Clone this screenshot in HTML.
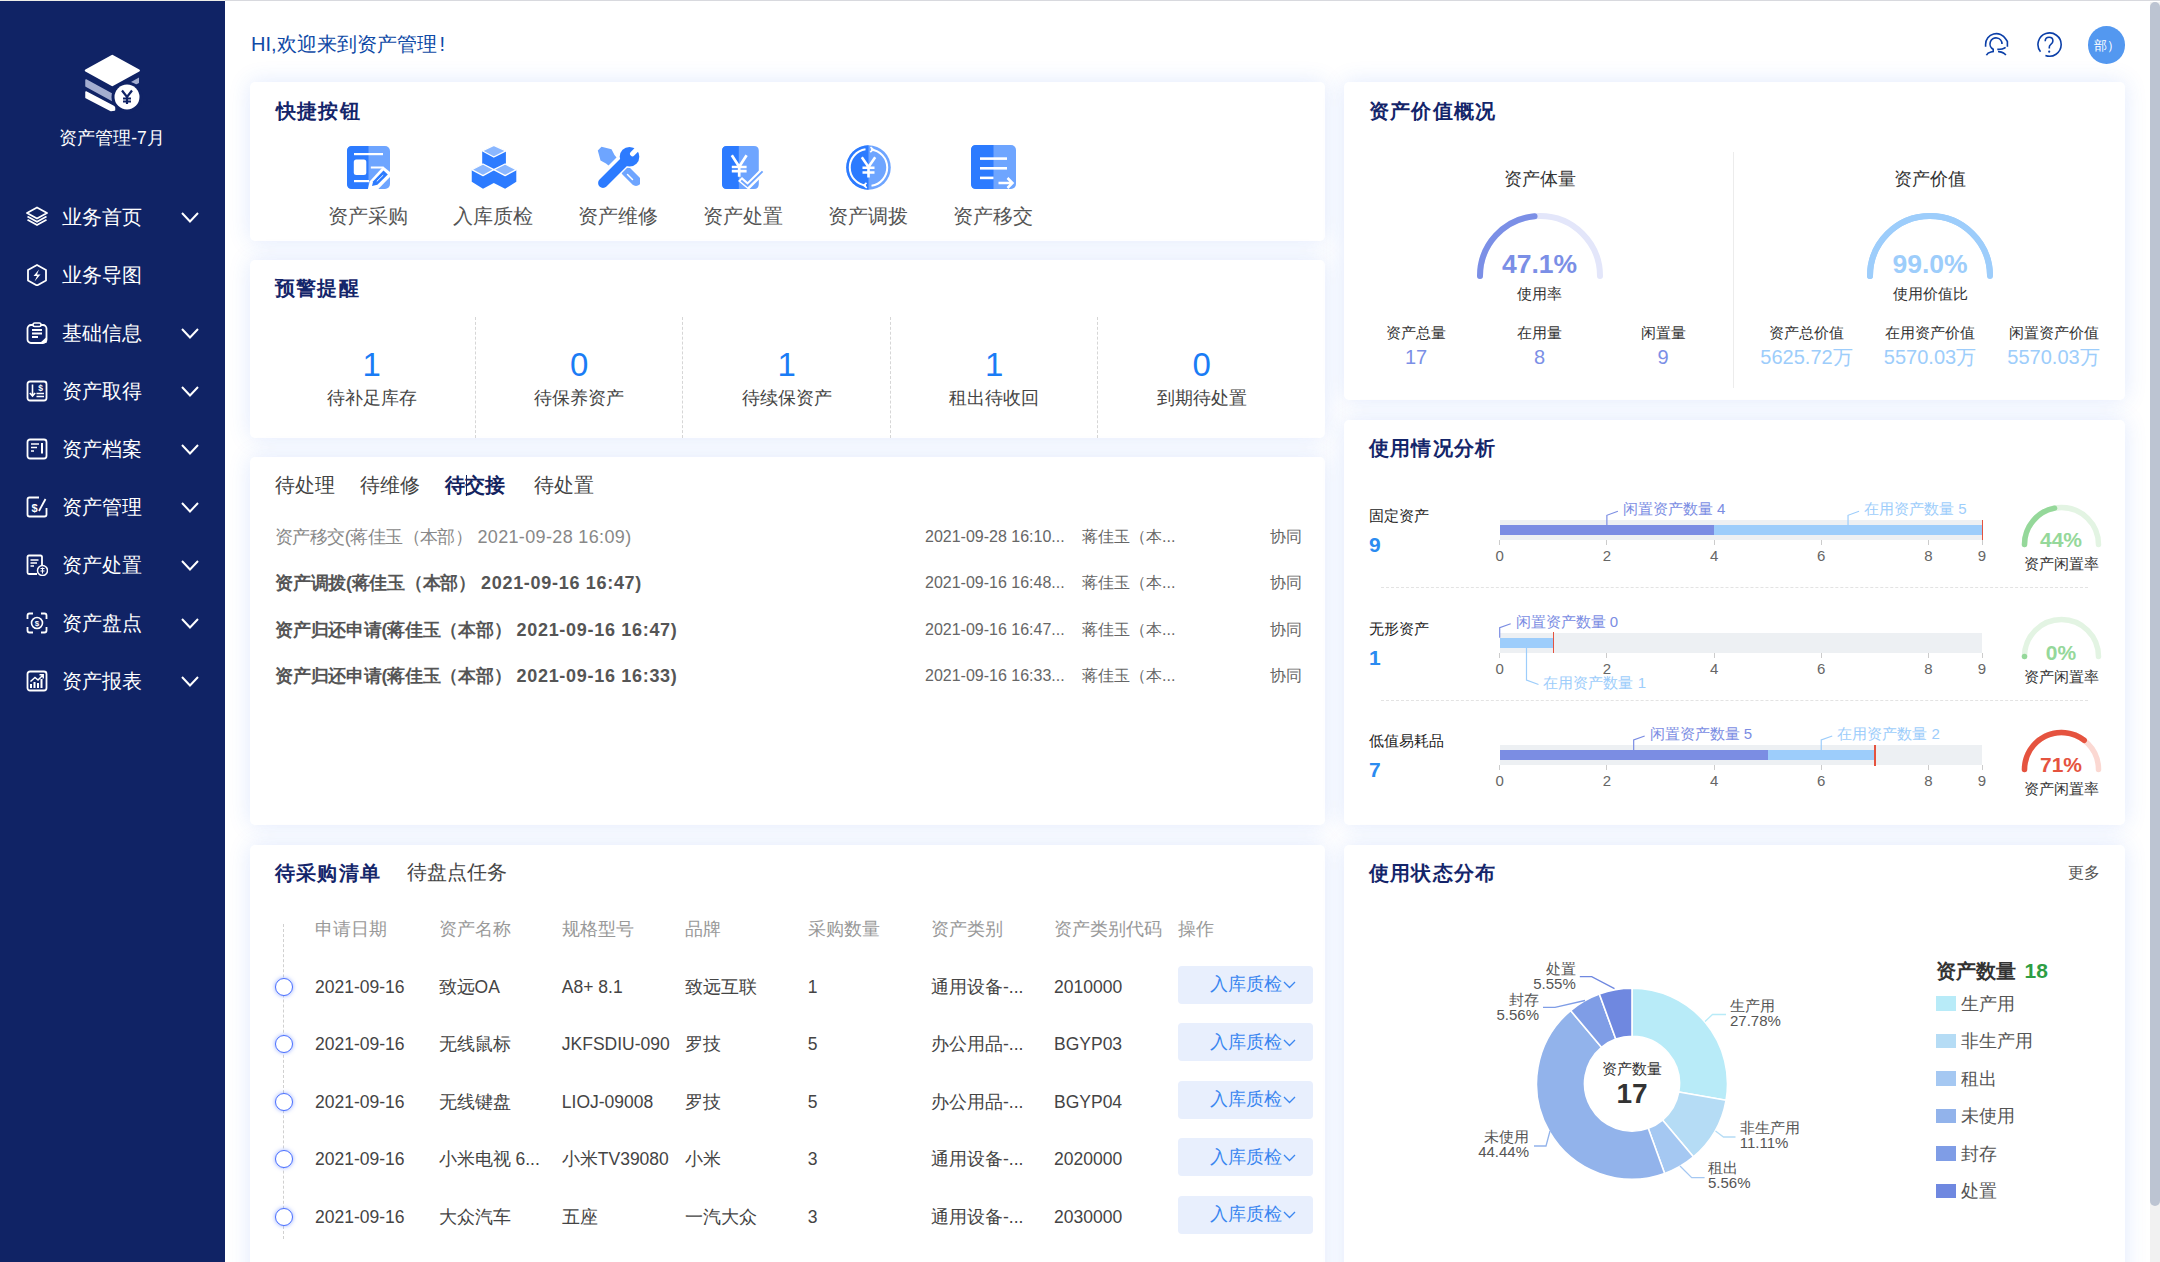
<!DOCTYPE html>
<html><head><meta charset="utf-8">
<style>
*{margin:0;padding:0;box-sizing:border-box}
html,body{width:2160px;height:1262px;overflow:hidden;background:#fff;font-family:"Liberation Sans",sans-serif;position:relative}
.t{position:absolute;line-height:1;white-space:nowrap}
.c{transform:translateX(-50%)}
.r{transform:translateX(-100%)}
.card{position:absolute;background:#fff;border-radius:5px;box-shadow:0 0 22px rgba(50,110,240,0.15)}
.side{position:absolute;left:0;top:1px;width:225px;height:1261px;background:#102365}
.mi{position:absolute;left:0;width:225px;height:40px}
.mi .tx{position:absolute;left:62px;top:10px;font-size:20px;line-height:20px;color:#fff}
.mi svg.ic{position:absolute;left:26px;top:9px}
.mi svg.ch{position:absolute;left:181px;top:15px}
.ttl{font-size:19.5px;font-weight:900;color:#14256a;letter-spacing:1.2px}
</style></head><body>
<!-- top line -->
<div style="position:absolute;left:225px;top:0;width:1935px;height:1px;background:#d8d9de"></div><div style="position:absolute;left:0;top:0;width:225px;height:1px;background:#eeeee8"></div>
<!-- sidebar -->
<div class="side" id="side">
<svg style="position:absolute;left:0;top:-1px" width="225" height="160" viewBox="0 0 225 160">
 <polygon points="86,70.5 112.3,56 138.7,70.5 112.3,85" fill="#fff" stroke="#fff" stroke-width="2.5" stroke-linejoin="round"/>
 <polygon points="86,80 112.5,94.5 112.5,100.5 86,86" fill="#a4aed0" stroke="#a4aed0" stroke-width="1.5" stroke-linejoin="round"/>
 <polygon points="131,82 139,77.5 139,83 133,86" fill="#a4aed0"/>
 <polygon points="86,92 114.5,107 114.5,110 111,110.5 86,97.5" fill="#fff" stroke="#fff" stroke-width="1.5" stroke-linejoin="round"/>
 <circle cx="127" cy="97" r="15.5" fill="#102365"/>
 <circle cx="127" cy="97" r="12.5" fill="#fff"/>
 <path d="M122,90.5 L127,97 L132,90.5 M127,97 L127,104 M123,98.5 L131,98.5 M123,101.5 L131,101.5" stroke="#102365" stroke-width="2.2" fill="none"/>
</svg>
<div class="t c" style="left:112px;top:129px;font-size:17.5px;color:#fff">资产管理-7月</div>
<div class="mi" style="top:195.5px"><svg class="ic" width="22" height="22" viewBox="0 0 22 22"><path d="M11,1.5 L21,7 L11,12.5 L1,7 Z M1.5,10.5 L11,15.8 L20.5,10.5 M1.5,13.8 L11,19 L20.5,13.8" stroke="#fff" stroke-width="1.8" fill="none" stroke-linejoin="round"/></svg><div class="tx">业务首页</div><svg class="ch" width="18" height="11" viewBox="0 0 18 11"><path d="M1,1 L9,9.5 L17,1" stroke="#fff" stroke-width="2" fill="none"/></svg></div>
<div class="mi" style="top:253.5px"><svg class="ic" width="22" height="22" viewBox="0 0 22 22"><path d="M11,1 L20,6 L20,16.5 L11,21.5 L2,16.5 L2,6 Z" stroke="#fff" stroke-width="1.8" fill="none" stroke-linejoin="round"/><path d="M13,5.5 L7.5,12 L11,12 L8.5,17.5 L14.5,10.5 L11,10.5 Z" fill="#fff"/></svg><div class="tx">业务导图</div></div>
<div class="mi" style="top:311.5px"><svg class="ic" width="22" height="22" viewBox="0 0 22 22"><rect x="1.5" y="3" width="19" height="18" rx="3.5" stroke="#fff" stroke-width="1.8" fill="none"/><rect x="7" y="1" width="8" height="3.5" rx="1.7" fill="#102365" stroke="#fff" stroke-width="1.6"/><path d="M6,8 H16 M6,11.5 H16 M6,15 H12" stroke="#fff" stroke-width="1.8"/><path d="M14,21 L20.5,15 L20.5,21 Z" fill="#fff"/></svg><div class="tx">基础信息</div><svg class="ch" width="18" height="11" viewBox="0 0 18 11"><path d="M1,1 L9,9.5 L17,1" stroke="#fff" stroke-width="2" fill="none"/></svg></div>
<div class="mi" style="top:369.5px"><svg class="ic" width="22" height="22" viewBox="0 0 22 22"><rect x="1.5" y="1.5" width="19" height="19" rx="2.5" stroke="#fff" stroke-width="1.8" fill="none"/><path d="M6.5,4.5 V16 M3.8,13 L6.5,16 L9.2,13" stroke="#fff" stroke-width="1.6" fill="none"/><text x="14.5" y="11" font-size="8.5" font-weight="bold" fill="#fff" text-anchor="middle" font-family="Liberation Sans">$</text><path d="M10.5,13.5 H18 M10.5,16.5 H18" stroke="#fff" stroke-width="1.5"/></svg><div class="tx">资产取得</div><svg class="ch" width="18" height="11" viewBox="0 0 18 11"><path d="M1,1 L9,9.5 L17,1" stroke="#fff" stroke-width="2" fill="none"/></svg></div>
<div class="mi" style="top:427.5px"><svg class="ic" width="22" height="22" viewBox="0 0 22 22"><rect x="1.5" y="1.5" width="19" height="19" rx="2.5" stroke="#fff" stroke-width="1.8" fill="none"/><path d="M5,6 H13 M5,9.5 H11 M5,13 H8" stroke="#fff" stroke-width="1.7"/><path d="M16,5 V15.5" stroke="#fff" stroke-width="2"/></svg><div class="tx">资产档案</div><svg class="ch" width="18" height="11" viewBox="0 0 18 11"><path d="M1,1 L9,9.5 L17,1" stroke="#fff" stroke-width="2" fill="none"/></svg></div>
<div class="mi" style="top:485.5px"><svg class="ic" width="22" height="22" viewBox="0 0 22 22"><path d="M13,1.5 H3.5 Q1.5,1.5 1.5,3.5 V18.5 Q1.5,20.5 3.5,20.5 H18.5 Q20.5,20.5 20.5,18.5 V12" stroke="#fff" stroke-width="1.8" fill="none"/><text x="8.5" y="15.5" font-size="11" font-weight="bold" fill="#fff" text-anchor="middle" font-family="Liberation Sans">$</text><path d="M13,15 L19.5,3" stroke="#fff" stroke-width="1.8"/></svg><div class="tx">资产管理</div><svg class="ch" width="18" height="11" viewBox="0 0 18 11"><path d="M1,1 L9,9.5 L17,1" stroke="#fff" stroke-width="2" fill="none"/></svg></div>
<div class="mi" style="top:543.5px"><svg class="ic" width="22" height="22" viewBox="0 0 22 22"><path d="M16,12 V3 Q16,1.5 14.5,1.5 H3 Q1.5,1.5 1.5,3 V18.5 Q1.5,20 3,20 H11" stroke="#fff" stroke-width="1.8" fill="none"/><path d="M4.5,6 H12.5 M4.5,9 H11 M4.5,12 H8" stroke="#fff" stroke-width="1.6"/><circle cx="16.5" cy="16.5" r="5" fill="#102365" stroke="#fff" stroke-width="1.5"/><path d="M14.5,14.5 H18.5 M16.5,13.5 V19.5 M14.5,17 H18.5" stroke="#fff" stroke-width="1.1"/></svg><div class="tx">资产处置</div><svg class="ch" width="18" height="11" viewBox="0 0 18 11"><path d="M1,1 L9,9.5 L17,1" stroke="#fff" stroke-width="2" fill="none"/></svg></div>
<div class="mi" style="top:601.5px"><svg class="ic" width="22" height="22" viewBox="0 0 22 22"><path d="M1.5,7 V3.5 Q1.5,1.5 3.5,1.5 H7 M15,1.5 H18.5 Q20.5,1.5 20.5,3.5 V7 M20.5,15 V18.5 Q20.5,20.5 18.5,20.5 H15 M7,20.5 H3.5 Q1.5,20.5 1.5,18.5 V15" stroke="#fff" stroke-width="1.8" fill="none"/><circle cx="11" cy="11" r="5.5" stroke="#fff" stroke-width="1.6" fill="none"/><text x="11" y="14" font-size="8" font-weight="bold" fill="#fff" text-anchor="middle" font-family="Liberation Sans">$</text></svg><div class="tx">资产盘点</div><svg class="ch" width="18" height="11" viewBox="0 0 18 11"><path d="M1,1 L9,9.5 L17,1" stroke="#fff" stroke-width="2" fill="none"/></svg></div>
<div class="mi" style="top:659.5px"><svg class="ic" width="22" height="22" viewBox="0 0 22 22"><rect x="1.5" y="1.5" width="19" height="19" rx="2.5" stroke="#fff" stroke-width="1.8" fill="none"/><path d="M5,18 V14 M8.5,18 V12 M12,18 V13 M15.5,18 V9" stroke="#fff" stroke-width="2"/><path d="M4.5,11.5 L9,7.5 L12,10 L17,5 M13.5,4.8 H17.2 V8.5" stroke="#fff" stroke-width="1.5" fill="none"/></svg><div class="tx">资产报表</div><svg class="ch" width="18" height="11" viewBox="0 0 18 11"><path d="M1,1 L9,9.5 L17,1" stroke="#fff" stroke-width="2" fill="none"/></svg></div>
</div>
<!-- scrollbar -->
<div style="position:absolute;left:2150px;top:2px;width:10px;height:1260px;background:#f1f1f1"></div>
<div style="position:absolute;left:2150px;top:2px;width:10px;height:1204px;background:#bcc4d2;border-radius:5px"></div>

<!-- header -->
<div class="t" style="left:251px;top:34px;font-size:20px;color:#0f4aa6">HI,欢迎来到资产管理<span style="margin-left:3px">!</span></div>

<!-- header icons -->
<svg style="position:absolute;left:1983px;top:31px" width="27" height="27" viewBox="0 0 27 27">
<path d="M2.6,15.8 V13.4 A10.8,10.8 0 0 1 22.75,8 L24.4,10.6 V15.8" stroke="#0b3fa8" stroke-width="1.6" fill="none"/>
<path d="M19,12.9 A6,6 0 1 0 10.2,18.2 V20.6 L8,21 Q4.5,21.7 3.4,24.2" stroke="#0b3fa8" stroke-width="1.6" fill="none"/>
<path d="M14.3,18.4 Q20,18.3 22.6,16.3" stroke="#0b3fa8" stroke-width="1.6" fill="none"/>
<path d="M15.8,19.8 V20.6 Q21.5,21.5 22.8,24.2" stroke="#0b3fa8" stroke-width="1.6" fill="none"/>
</svg>
<svg style="position:absolute;left:2035px;top:31px" width="28" height="28" viewBox="0 0 28 28">
<path d="M10.4,24.4 A11.6,11.6 0 1 0 5.5,20.8" stroke="#0b3fa8" stroke-width="1.6" fill="none"/>
<path d="M10.2,10.3 Q10.2,6.3 14.1,6.3 Q17.9,6.3 17.9,9.9 Q17.9,12 15.6,13.6 Q14.3,14.5 14.3,16.3 V17.6" stroke="#0b3fa8" stroke-width="1.6" fill="none"/>
<circle cx="14.2" cy="20.7" r="1.1" fill="#0b3fa8"/>
</svg>
<div style="position:absolute;left:2087.5px;top:26px;width:37.5px;height:38px;border-radius:50%;background:#5398f0"></div>
<div class="t" style="left:2094px;top:40px;font-size:12.5px;color:#fff">部）</div>
<!-- cards -->
<div class="card" style="left:250px;top:82px;width:1075px;height:159px"></div>
<div class="card" style="left:250px;top:260px;width:1075px;height:178px"></div>
<div class="card" style="left:250px;top:457px;width:1075px;height:368px"></div>
<div class="card" style="left:250px;top:845px;width:1075px;height:460px"></div>
<div class="card" style="left:1344px;top:82px;width:781px;height:318px"></div>
<div class="card" style="left:1344px;top:420px;width:781px;height:405px"></div>
<div class="card" style="left:1344px;top:845px;width:781px;height:460px"></div>

<!-- cardA -->
<div class="t ttl" style="left:276px;top:101.5px">快捷按钮</div>
<div style="position:absolute;left:347px;top:146px;line-height:0"><svg width="43" height="43" viewBox="0 0 43 43">
<rect x="0" y="0" width="43" height="43" rx="5" fill="#6ea5ff"/>
<path d="M5,0 H21.5 V43 H5 Q0,43 0,38 V5 Q0,0 5,0 Z" fill="#2c7bff"/>
<rect x="7" y="7" width="29" height="2.2" fill="#fff"/>
<rect x="6.8" y="13.6" width="12.5" height="15.4" rx="2.5" fill="#fff"/>
<rect x="7" y="34" width="15" height="2.2" fill="#fff"/>
<rect x="23.8" y="20.5" width="12.5" height="2" fill="#fff"/>
<path d="M20.9,43 L22.8,35.2 L36.3,20.5 L43,26 L43,31 L31.3,43 Z" fill="#fff"/>
<path d="M25,40 L26.2,35.3 L36.5,24.6 L40.8,28.4 L30.4,38.8 Z" fill="#2c7bff"/>
<path d="M29.8,35.4 L36.2,29.1" stroke="#fff" stroke-width="0.9"/>
</svg></div>
<div class="t c" style="left:368px;top:205.5px;font-size:20px;color:#555">资产采购</div>
<div style="position:absolute;left:470.5px;top:145px;line-height:0"><svg width="46" height="44" viewBox="0 0 46 44">
<path d="M0.75,24.6 L11.2,19.4 L11.2,5.8 L22.8,0.5 L34.9,5.8 L34.9,19.4 L45.3,24.6 L45.3,36.7 L34.1,43.75 L22.8,37.9 L12,43.75 L0.75,36.7 Z" fill="#2c7bff"/>
<path d="M22.8,0.3 L34.9,5.8 L22.8,12 L11.2,5.8 Z" fill="#8ab7ff" stroke="#fff" stroke-width="1.3" stroke-linejoin="round"/>
<path d="M12,19 L22.8,24.6 L12,30.6 L0.75,24.6 Z" fill="#8ab7ff" stroke="#fff" stroke-width="1.3" stroke-linejoin="round"/>
<path d="M34.1,19 L45.3,24.6 L34.1,30.6 L22.8,24.6 Z" fill="#8ab7ff" stroke="#fff" stroke-width="1.3" stroke-linejoin="round"/>
</svg></div>
<div class="t c" style="left:493px;top:205.5px;font-size:20px;color:#555">入库质检</div>
<div style="position:absolute;left:597px;top:146px;line-height:0"><svg width="43" height="43" viewBox="0 0 43 43">
<path d="M4.5,0.8 L14.5,3.3 L17.5,9 L19.5,11.5 L11.5,19.5 L9,17.5 L3.5,14.5 L0.8,4.5 Z" fill="#6ea5ff"/>
<path d="M29,25 L39,35" stroke="#6ea5ff" stroke-width="10" stroke-linecap="round"/>
<path d="M30.5,28.5 L35.5,33.5" stroke="#fff" stroke-width="1.5" stroke-linecap="round"/>
<path d="M6,37 L26,17" stroke="#fff" stroke-width="12.5" stroke-linecap="round"/>
<circle cx="32.5" cy="10.8" r="11.2" fill="#fff"/>
<path d="M6,37 L26,17" stroke="#2c7bff" stroke-width="9.8" stroke-linecap="round"/>
<circle cx="32.5" cy="10.8" r="9.8" fill="#2c7bff"/>
<path d="M35.5,7.8 L43,0.3" stroke="#fff" stroke-width="5" stroke-linecap="round"/>
</svg></div>
<div class="t c" style="left:618px;top:205.5px;font-size:20px;color:#555">资产维修</div>
<div style="position:absolute;left:722px;top:146px;line-height:0"><svg width="43" height="43" viewBox="0 0 43 43">
<path d="M5,0 H32 Q36.8,0 36.8,5 V38 Q36.8,43 32,43 H5 Q0,43 0,38 V5 Q0,0 5,0 Z" fill="#6ea5ff"/>
<path d="M5,0 H16.8 V43 H5 Q0,43 0,38 V5 Q0,0 5,0 Z" fill="#2c7bff"/>
<path d="M9.8,9.3 L17.2,20.8 L24.6,9.3 M17.2,20.8 V30.8 M9.8,21 H24.6 M9.8,25.2 H24.6" stroke="#fff" stroke-width="2.7" fill="none"/>
<path d="M25.6,43 L16,35 L20,31 L25.6,36 L38.5,23 L43,27.5 L27.5,43 Z" fill="#fff"/>
<path d="M19.2,34.6 L25.6,40 L40.6,25.4" stroke="#6ea5ff" stroke-width="1.9" fill="none"/>
</svg></div>
<div class="t c" style="left:743px;top:205.5px;font-size:20px;color:#555">资产处置</div>
<div style="position:absolute;left:846px;top:145px;line-height:0"><svg width="45" height="45" viewBox="0 0 45 45">
<circle cx="22.5" cy="22.5" r="22.3" fill="#6ea5ff"/>
<path d="M22.5,0.2 A22.3,22.3 0 0 0 22.5,44.8 Z" fill="#2c7bff"/>
<path d="M19.5,4.3 A18.3,18.3 0 0 0 20,40.6" stroke="#fff" stroke-width="2" fill="none"/>
<path d="M25.5,40.7 A18.3,18.3 0 0 0 25,4.4" stroke="#fff" stroke-width="2" fill="none"/>
<path d="M24.5,2.2 L27.2,4.6 L24.2,7.2 M20.5,37.8 L17.8,40.4 L20.8,42.8" stroke="#fff" stroke-width="1.7" fill="none"/>
<path d="M15.8,12.3 L22.5,22 L29.2,12.3 M22.5,22 V32.5 M16.5,22.8 H28.5 M16.5,27.5 H28.5" stroke="#fff" stroke-width="2.6" fill="none"/>
</svg></div>
<div class="t c" style="left:868px;top:205.5px;font-size:20px;color:#555">资产调拨</div>
<div style="position:absolute;left:970.5px;top:145px;line-height:0"><svg width="45" height="44" viewBox="0 0 45 44">
<rect x="0" y="0" width="45" height="44" rx="5" fill="#6ea5ff"/>
<path d="M5,0 H22.5 V44 H5 Q0,44 0,39 V5 Q0,0 5,0 Z" fill="#2c7bff"/>
<rect x="9" y="12.3" width="27" height="2.6" fill="#fff"/>
<rect x="9" y="22" width="27" height="2.6" fill="#fff"/>
<rect x="9" y="31.6" width="13.5" height="2.6" fill="#fff"/>
<path d="M27.5,38 H41.5 M36.5,33 L41.5,38 L36.5,43" stroke="#fff" stroke-width="2.5" fill="none"/>
</svg></div>
<div class="t c" style="left:993px;top:205.5px;font-size:20px;color:#555">资产移交</div>
<!-- cardB -->
<div class="t ttl" style="left:275px;top:279.0px">预警提醒</div>
<div class="t c" style="left:371.7px;top:348px;font-size:33px;color:#1a7cf5">1</div>
<div class="t c" style="left:371.7px;top:388.5px;font-size:18px;color:#444">待补足库存</div>
<div class="t c" style="left:579.2px;top:348px;font-size:33px;color:#1a7cf5">0</div>
<div class="t c" style="left:579.2px;top:388.5px;font-size:18px;color:#444">待保养资产</div>
<div class="t c" style="left:786.7px;top:348px;font-size:33px;color:#1a7cf5">1</div>
<div class="t c" style="left:786.7px;top:388.5px;font-size:18px;color:#444">待续保资产</div>
<div class="t c" style="left:994.2px;top:348px;font-size:33px;color:#1a7cf5">1</div>
<div class="t c" style="left:994.2px;top:388.5px;font-size:18px;color:#444">租出待收回</div>
<div class="t c" style="left:1201.7px;top:348px;font-size:33px;color:#1a7cf5">0</div>
<div class="t c" style="left:1201.7px;top:388.5px;font-size:18px;color:#444">到期待处置</div>
<div style="position:absolute;left:474.5px;top:317px;height:121px;border-left:1px dashed #d6d6d6"></div>
<div style="position:absolute;left:682.0px;top:317px;height:121px;border-left:1px dashed #d6d6d6"></div>
<div style="position:absolute;left:889.5px;top:317px;height:121px;border-left:1px dashed #d6d6d6"></div>
<div style="position:absolute;left:1097.0px;top:317px;height:121px;border-left:1px dashed #d6d6d6"></div>
<!-- cardC -->
<div class="t" style="left:275px;top:475px;font-size:20px;color:#444">待处理</div>
<div class="t" style="left:360px;top:475px;font-size:20px;color:#444">待维修</div>
<div class="t" style="left:445.3px;top:475px;font-size:20px;font-weight:bold;color:#13235f">待交接</div>
<div class="t" style="left:533.7px;top:475px;font-size:20px;color:#444">待处置</div>
<div style="position:absolute;left:466px;top:475px;width:1px;height:21px;background:#13235f"></div>
<div class="t" style="left:275px;top:528px;font-size:18px;color:#888"><span style="letter-spacing:-0.55px">资产移交(蒋佳玉（本部）</span> <span style="letter-spacing:0.35px">2021-09-28 16:09)</span></div>
<div class="t" style="left:925px;top:529px;font-size:16px;color:#666">2021-09-28 16:10...</div>
<div class="t" style="left:1082px;top:529px;font-size:16px;color:#666">蒋佳玉（本...</div>
<div class="t" style="left:1270px;top:529px;font-size:16px;color:#666">协同</div>
<div class="t" style="left:275px;top:573.6px;font-size:18px;font-weight:bold;color:#555"><span style="letter-spacing:-0.25px">资产调拨(蒋佳玉（本部）</span> <span style="letter-spacing:0.7px">2021-09-16 16:47)</span></div>
<div class="t" style="left:925px;top:574.6px;font-size:16px;color:#666">2021-09-16 16:48...</div>
<div class="t" style="left:1082px;top:574.6px;font-size:16px;color:#666">蒋佳玉（本...</div>
<div class="t" style="left:1270px;top:574.6px;font-size:16px;color:#666">协同</div>
<div class="t" style="left:275px;top:620.5px;font-size:18px;font-weight:bold;color:#555"><span style="letter-spacing:-0.25px">资产归还申请(蒋佳玉（本部）</span> <span style="letter-spacing:0.7px">2021-09-16 16:47)</span></div>
<div class="t" style="left:925px;top:621.5px;font-size:16px;color:#666">2021-09-16 16:47...</div>
<div class="t" style="left:1082px;top:621.5px;font-size:16px;color:#666">蒋佳玉（本...</div>
<div class="t" style="left:1270px;top:621.5px;font-size:16px;color:#666">协同</div>
<div class="t" style="left:275px;top:667px;font-size:18px;font-weight:bold;color:#555"><span style="letter-spacing:-0.25px">资产归还申请(蒋佳玉（本部）</span> <span style="letter-spacing:0.7px">2021-09-16 16:33)</span></div>
<div class="t" style="left:925px;top:668px;font-size:16px;color:#666">2021-09-16 16:33...</div>
<div class="t" style="left:1082px;top:668px;font-size:16px;color:#666">蒋佳玉（本...</div>
<div class="t" style="left:1270px;top:668px;font-size:16px;color:#666">协同</div>
<!-- cardD -->
<div class="t ttl" style="left:275px;top:863.5px">待采购清单</div>
<div class="t" style="left:406.7px;top:862px;font-size:20px;color:#444">待盘点任务</div>
<div class="t" style="left:315px;top:919.6px;font-size:18px;color:#999">申请日期</div>
<div class="t" style="left:438.6px;top:919.6px;font-size:18px;color:#999">资产名称</div>
<div class="t" style="left:561.8px;top:919.6px;font-size:18px;color:#999">规格型号</div>
<div class="t" style="left:685px;top:919.6px;font-size:18px;color:#999">品牌</div>
<div class="t" style="left:807.7px;top:919.6px;font-size:18px;color:#999">采购数量</div>
<div class="t" style="left:931px;top:919.6px;font-size:18px;color:#999">资产类别</div>
<div class="t" style="left:1054px;top:919.6px;font-size:18px;color:#999">资产类别代码</div>
<div class="t" style="left:1178px;top:919.6px;font-size:18px;color:#999">操作</div>
<div style="position:absolute;left:283px;top:924px;height:315px;border-left:1px dashed #d0d0d0"></div>
<div style="position:absolute;left:274.5px;top:977.8px;width:18px;height:18px;border-radius:50%;border:1.6px solid #4a70ff;background:#fff;box-shadow:0 0 4px rgba(60,100,255,0.55)"></div>
<div class="t" style="left:315px;top:979.05px;font-size:17.5px;color:#444">2021-09-16</div>
<div class="t" style="left:438.6px;top:979.05px;font-size:17.5px;color:#444">致远OA</div>
<div class="t" style="left:561.8px;top:979.05px;font-size:17.5px;color:#444">A8+ 8.1</div>
<div class="t" style="left:685px;top:979.05px;font-size:17.5px;color:#444">致远互联</div>
<div class="t" style="left:807.7px;top:979.05px;font-size:17.5px;color:#444">1</div>
<div class="t" style="left:931px;top:979.05px;font-size:17.5px;color:#444">通用设备-...</div>
<div class="t" style="left:1054px;top:979.05px;font-size:17.5px;color:#444">2010000</div>
<div style="position:absolute;left:1178px;top:965.8px;width:135px;height:38px;background:#e8effd;border-radius:4px"></div>
<div class="t" style="left:1210px;top:975.3px;font-size:18px;color:#3a86f0">入库质检</div>
<svg style="position:absolute;left:1283px;top:981.3px" width="13" height="8" viewBox="0 0 13 8"><path d="M1,1 L6.5,6.5 L12,1" stroke="#3a86f0" stroke-width="1.3" fill="none"/></svg>
<div style="position:absolute;left:274.5px;top:1035px;width:18px;height:18px;border-radius:50%;border:1.6px solid #4a70ff;background:#fff;box-shadow:0 0 4px rgba(60,100,255,0.55)"></div>
<div class="t" style="left:315px;top:1036.25px;font-size:17.5px;color:#444">2021-09-16</div>
<div class="t" style="left:438.6px;top:1036.25px;font-size:17.5px;color:#444">无线鼠标</div>
<div class="t" style="left:561.8px;top:1036.25px;font-size:17.5px;color:#444">JKFSDIU-090</div>
<div class="t" style="left:685px;top:1036.25px;font-size:17.5px;color:#444">罗技</div>
<div class="t" style="left:807.7px;top:1036.25px;font-size:17.5px;color:#444">5</div>
<div class="t" style="left:931px;top:1036.25px;font-size:17.5px;color:#444">办公用品-...</div>
<div class="t" style="left:1054px;top:1036.25px;font-size:17.5px;color:#444">BGYP03</div>
<div style="position:absolute;left:1178px;top:1023.0px;width:135px;height:38px;background:#e8effd;border-radius:4px"></div>
<div class="t" style="left:1210px;top:1032.5px;font-size:18px;color:#3a86f0">入库质检</div>
<svg style="position:absolute;left:1283px;top:1038.5px" width="13" height="8" viewBox="0 0 13 8"><path d="M1,1 L6.5,6.5 L12,1" stroke="#3a86f0" stroke-width="1.3" fill="none"/></svg>
<div style="position:absolute;left:274.5px;top:1092.5px;width:18px;height:18px;border-radius:50%;border:1.6px solid #4a70ff;background:#fff;box-shadow:0 0 4px rgba(60,100,255,0.55)"></div>
<div class="t" style="left:315px;top:1093.75px;font-size:17.5px;color:#444">2021-09-16</div>
<div class="t" style="left:438.6px;top:1093.75px;font-size:17.5px;color:#444">无线键盘</div>
<div class="t" style="left:561.8px;top:1093.75px;font-size:17.5px;color:#444">LIOJ-09008</div>
<div class="t" style="left:685px;top:1093.75px;font-size:17.5px;color:#444">罗技</div>
<div class="t" style="left:807.7px;top:1093.75px;font-size:17.5px;color:#444">5</div>
<div class="t" style="left:931px;top:1093.75px;font-size:17.5px;color:#444">办公用品-...</div>
<div class="t" style="left:1054px;top:1093.75px;font-size:17.5px;color:#444">BGYP04</div>
<div style="position:absolute;left:1178px;top:1080.5px;width:135px;height:38px;background:#e8effd;border-radius:4px"></div>
<div class="t" style="left:1210px;top:1090.0px;font-size:18px;color:#3a86f0">入库质检</div>
<svg style="position:absolute;left:1283px;top:1096.0px" width="13" height="8" viewBox="0 0 13 8"><path d="M1,1 L6.5,6.5 L12,1" stroke="#3a86f0" stroke-width="1.3" fill="none"/></svg>
<div style="position:absolute;left:274.5px;top:1150px;width:18px;height:18px;border-radius:50%;border:1.6px solid #4a70ff;background:#fff;box-shadow:0 0 4px rgba(60,100,255,0.55)"></div>
<div class="t" style="left:315px;top:1151.25px;font-size:17.5px;color:#444">2021-09-16</div>
<div class="t" style="left:438.6px;top:1151.25px;font-size:17.5px;color:#444">小米电视 6...</div>
<div class="t" style="left:561.8px;top:1151.25px;font-size:17.5px;color:#444">小米TV39080</div>
<div class="t" style="left:685px;top:1151.25px;font-size:17.5px;color:#444">小米</div>
<div class="t" style="left:807.7px;top:1151.25px;font-size:17.5px;color:#444">3</div>
<div class="t" style="left:931px;top:1151.25px;font-size:17.5px;color:#444">通用设备-...</div>
<div class="t" style="left:1054px;top:1151.25px;font-size:17.5px;color:#444">2020000</div>
<div style="position:absolute;left:1178px;top:1138.0px;width:135px;height:38px;background:#e8effd;border-radius:4px"></div>
<div class="t" style="left:1210px;top:1147.5px;font-size:18px;color:#3a86f0">入库质检</div>
<svg style="position:absolute;left:1283px;top:1153.5px" width="13" height="8" viewBox="0 0 13 8"><path d="M1,1 L6.5,6.5 L12,1" stroke="#3a86f0" stroke-width="1.3" fill="none"/></svg>
<div style="position:absolute;left:274.5px;top:1207.5px;width:18px;height:18px;border-radius:50%;border:1.6px solid #4a70ff;background:#fff;box-shadow:0 0 4px rgba(60,100,255,0.55)"></div>
<div class="t" style="left:315px;top:1208.75px;font-size:17.5px;color:#444">2021-09-16</div>
<div class="t" style="left:438.6px;top:1208.75px;font-size:17.5px;color:#444">大众汽车</div>
<div class="t" style="left:561.8px;top:1208.75px;font-size:17.5px;color:#444">五座</div>
<div class="t" style="left:685px;top:1208.75px;font-size:17.5px;color:#444">一汽大众</div>
<div class="t" style="left:807.7px;top:1208.75px;font-size:17.5px;color:#444">3</div>
<div class="t" style="left:931px;top:1208.75px;font-size:17.5px;color:#444">通用设备-...</div>
<div class="t" style="left:1054px;top:1208.75px;font-size:17.5px;color:#444">2030000</div>
<div style="position:absolute;left:1178px;top:1195.5px;width:135px;height:38px;background:#e8effd;border-radius:4px"></div>
<div class="t" style="left:1210px;top:1205.0px;font-size:18px;color:#3a86f0">入库质检</div>
<svg style="position:absolute;left:1283px;top:1211.0px" width="13" height="8" viewBox="0 0 13 8"><path d="M1,1 L6.5,6.5 L12,1" stroke="#3a86f0" stroke-width="1.3" fill="none"/></svg>
<!-- cardE -->
<div class="t ttl" style="left:1369px;top:101.5px">资产价值概况</div>
<div style="position:absolute;left:1733px;top:152px;width:1px;height:236px;background:#ececec"></div>
<div class="t c" style="left:1539.5px;top:170px;font-size:18px;color:#333">资产体量</div>
<svg style="position:absolute;left:1473.5px;top:210px" width="132" height="72" viewBox="1473.5 210 132 72"><path d="M1479.5,276 A60,60 0 0 1 1599.5,276" stroke="#e3e6fa" stroke-width="6" fill="none" stroke-linecap="round"/><path d="M1479.50,276.00 A60,60 0 0 1 1534.04,216.25" stroke="#7b8fe6" stroke-width="6" fill="none" stroke-linecap="round"/></svg>
<div class="t c" style="left:1539.5px;top:251px;font-size:26.5px;font-weight:bold;color:#7b8fe6">47.1%</div>
<div class="t c" style="left:1539.5px;top:285.5px;font-size:15px;color:#333">使用率</div>
<div class="t c" style="left:1416.0px;top:325px;font-size:15px;color:#333">资产总量</div>
<div class="t c" style="left:1416.0px;top:347px;font-size:20px;color:#7b8fe6">17</div>
<div class="t c" style="left:1539.5px;top:325px;font-size:15px;color:#333">在用量</div>
<div class="t c" style="left:1539.5px;top:347px;font-size:20px;color:#7b8fe6">8</div>
<div class="t c" style="left:1663.0px;top:325px;font-size:15px;color:#333">闲置量</div>
<div class="t c" style="left:1663.0px;top:347px;font-size:20px;color:#7b8fe6">9</div>
<div class="t c" style="left:1930px;top:170px;font-size:18px;color:#333">资产价值</div>
<svg style="position:absolute;left:1864px;top:210px" width="132" height="72" viewBox="1864 210 132 72"><path d="M1870,276 A60,60 0 0 1 1990,276" stroke="#9dcdfb" stroke-width="6" fill="none" stroke-linecap="round"/><path d="M1870.00,276.00 A60,60 0 0 1 1989.97,274.12" stroke="#9dcdfb" stroke-width="6" fill="none" stroke-linecap="round"/></svg>
<div class="t c" style="left:1930px;top:251px;font-size:26.5px;font-weight:bold;color:#9dcdfb">99.0%</div>
<div class="t c" style="left:1930px;top:285.5px;font-size:15px;color:#333">使用价值比</div>
<div class="t c" style="left:1806.5px;top:325px;font-size:15px;color:#333">资产总价值</div>
<div class="t c" style="left:1806.5px;top:347px;font-size:20px;color:#9dcdfb">5625.72万</div>
<div class="t c" style="left:1930px;top:325px;font-size:15px;color:#333">在用资产价值</div>
<div class="t c" style="left:1930px;top:347px;font-size:20px;color:#9dcdfb">5570.03万</div>
<div class="t c" style="left:2053.5px;top:325px;font-size:15px;color:#333">闲置资产价值</div>
<div class="t c" style="left:2053.5px;top:347px;font-size:20px;color:#9dcdfb">5570.03万</div>
<!-- cardF -->
<div class="t ttl" style="left:1369px;top:439.0px">使用情况分析</div>
<div class="t" style="left:1369px;top:508.29999999999995px;font-size:15px;color:#222">固定资产</div>
<div class="t" style="left:1369px;top:534.3px;font-size:21px;font-weight:bold;color:#2b8bf0">9</div>
<div style="position:absolute;left:1499.7px;top:520.3px;width:482.3100000000002px;height:20px;background:#edf0f3"></div>
<div style="position:absolute;left:1499.7px;top:525.3px;width:214.36px;height:10px;background:#7b8de3"></div>
<div style="position:absolute;left:1714.06px;top:525.3px;width:267.95000000000005px;height:10px;background:#9dcdfb"></div>
<div style="position:absolute;left:1981.5100000000002px;top:519.8px;width:1.5px;height:21px;background:#e5533f"></div>
<div style="position:absolute;left:1499.2px;top:540.3px;width:1px;height:5px;background:#ccc"></div>
<div class="t c" style="left:1499.7px;top:548.3px;font-size:15px;color:#666">0</div>
<div style="position:absolute;left:1606.38px;top:540.3px;width:1px;height:5px;background:#ccc"></div>
<div class="t c" style="left:1606.88px;top:548.3px;font-size:15px;color:#666">2</div>
<div style="position:absolute;left:1713.56px;top:540.3px;width:1px;height:5px;background:#ccc"></div>
<div class="t c" style="left:1714.06px;top:548.3px;font-size:15px;color:#666">4</div>
<div style="position:absolute;left:1820.74px;top:540.3px;width:1px;height:5px;background:#ccc"></div>
<div class="t c" style="left:1821.24px;top:548.3px;font-size:15px;color:#666">6</div>
<div style="position:absolute;left:1927.92px;top:540.3px;width:1px;height:5px;background:#ccc"></div>
<div class="t c" style="left:1928.42px;top:548.3px;font-size:15px;color:#666">8</div>
<div style="position:absolute;left:1981.5100000000002px;top:540.3px;width:1px;height:5px;background:#ccc"></div>
<div class="t c" style="left:1982.0100000000002px;top:548.3px;font-size:15px;color:#666">9</div>
<svg style="position:absolute;left:2018.5px;top:501.79999999999995px" width="85.0" height="48.0" viewBox="2018.5 501.79999999999995 85.0 48.0"><path d="M2024,544.3 A37,37 0 0 1 2098,544.3" stroke="#e3f4e3" stroke-width="5.5" fill="none" stroke-linecap="round"/><path d="M2024.00,544.30 A37,37 0 0 1 2054.07,507.96" stroke="#95d89a" stroke-width="5.5" fill="none" stroke-linecap="round"/></svg>
<div class="t c" style="left:2061px;top:529.3px;font-size:21px;font-weight:bold;color:#95d89a">44%</div>
<div class="t c" style="left:2061px;top:556.3px;font-size:15px;color:#333">资产闲置率</div>
<div style="position:absolute;left:1381px;top:587.3px;width:707px;border-top:1px dashed #e3e3e3"></div>
<div class="t" style="left:1369px;top:620.7px;font-size:15px;color:#222">无形资产</div>
<div class="t" style="left:1369px;top:646.7px;font-size:21px;font-weight:bold;color:#2b8bf0">1</div>
<div style="position:absolute;left:1499.7px;top:632.7px;width:482.3100000000002px;height:20px;background:#edf0f3"></div>
<div style="position:absolute;left:1499.7px;top:637.7px;width:53.59px;height:10px;background:#9dcdfb"></div>
<div style="position:absolute;left:1552.79px;top:632.2px;width:1.5px;height:21px;background:#e5533f"></div>
<div style="position:absolute;left:1499.2px;top:652.7px;width:1px;height:5px;background:#ccc"></div>
<div class="t c" style="left:1499.7px;top:660.7px;font-size:15px;color:#666">0</div>
<div style="position:absolute;left:1606.38px;top:652.7px;width:1px;height:5px;background:#ccc"></div>
<div class="t c" style="left:1606.88px;top:660.7px;font-size:15px;color:#666">2</div>
<div style="position:absolute;left:1713.56px;top:652.7px;width:1px;height:5px;background:#ccc"></div>
<div class="t c" style="left:1714.06px;top:660.7px;font-size:15px;color:#666">4</div>
<div style="position:absolute;left:1820.74px;top:652.7px;width:1px;height:5px;background:#ccc"></div>
<div class="t c" style="left:1821.24px;top:660.7px;font-size:15px;color:#666">6</div>
<div style="position:absolute;left:1927.92px;top:652.7px;width:1px;height:5px;background:#ccc"></div>
<div class="t c" style="left:1928.42px;top:660.7px;font-size:15px;color:#666">8</div>
<div style="position:absolute;left:1981.5100000000002px;top:652.7px;width:1px;height:5px;background:#ccc"></div>
<div class="t c" style="left:1982.0100000000002px;top:660.7px;font-size:15px;color:#666">9</div>
<svg style="position:absolute;left:2018.5px;top:614.2px" width="85.0" height="48.0" viewBox="2018.5 614.2 85.0 48.0"><path d="M2024,656.7 A37,37 0 0 1 2098,656.7" stroke="#e3f4e3" stroke-width="5.5" fill="none" stroke-linecap="round"/><circle cx="2024" cy="656.7" r="2.75" fill="#95d89a"/></svg>
<div class="t c" style="left:2061px;top:641.7px;font-size:21px;font-weight:bold;color:#95d89a">0%</div>
<div class="t c" style="left:2061px;top:668.7px;font-size:15px;color:#333">资产闲置率</div>
<div style="position:absolute;left:1381px;top:699.7px;width:707px;border-top:1px dashed #e3e3e3"></div>
<div class="t" style="left:1369px;top:733.0px;font-size:15px;color:#222">低值易耗品</div>
<div class="t" style="left:1369px;top:759.0px;font-size:21px;font-weight:bold;color:#2b8bf0">7</div>
<div style="position:absolute;left:1499.7px;top:745px;width:482.3100000000002px;height:20px;background:#edf0f3"></div>
<div style="position:absolute;left:1499.7px;top:750px;width:267.95000000000005px;height:10px;background:#7b8de3"></div>
<div style="position:absolute;left:1767.65px;top:750px;width:107.18px;height:10px;background:#9dcdfb"></div>
<div style="position:absolute;left:1874.33px;top:744.5px;width:1.5px;height:21px;background:#e5533f"></div>
<div style="position:absolute;left:1499.2px;top:765px;width:1px;height:5px;background:#ccc"></div>
<div class="t c" style="left:1499.7px;top:773px;font-size:15px;color:#666">0</div>
<div style="position:absolute;left:1606.38px;top:765px;width:1px;height:5px;background:#ccc"></div>
<div class="t c" style="left:1606.88px;top:773px;font-size:15px;color:#666">2</div>
<div style="position:absolute;left:1713.56px;top:765px;width:1px;height:5px;background:#ccc"></div>
<div class="t c" style="left:1714.06px;top:773px;font-size:15px;color:#666">4</div>
<div style="position:absolute;left:1820.74px;top:765px;width:1px;height:5px;background:#ccc"></div>
<div class="t c" style="left:1821.24px;top:773px;font-size:15px;color:#666">6</div>
<div style="position:absolute;left:1927.92px;top:765px;width:1px;height:5px;background:#ccc"></div>
<div class="t c" style="left:1928.42px;top:773px;font-size:15px;color:#666">8</div>
<div style="position:absolute;left:1981.5100000000002px;top:765px;width:1px;height:5px;background:#ccc"></div>
<div class="t c" style="left:1982.0100000000002px;top:773px;font-size:15px;color:#666">9</div>
<svg style="position:absolute;left:2018.5px;top:726.5px" width="85.0" height="48.0" viewBox="2018.5 726.5 85.0 48.0"><path d="M2024,769 A37,37 0 0 1 2098,769" stroke="#fbd8d2" stroke-width="5.5" fill="none" stroke-linecap="round"/><path d="M2024.00,769.00 A37,37 0 0 1 2083.68,739.76" stroke="#e5533f" stroke-width="5.5" fill="none" stroke-linecap="round"/></svg>
<div class="t c" style="left:2061px;top:754px;font-size:21px;font-weight:bold;color:#e5533f">71%</div>
<div class="t c" style="left:2061px;top:781px;font-size:15px;color:#333">资产闲置率</div>
<svg style="position:absolute;left:0;top:0;overflow:visible" width="1" height="1"><path d="M1606.88,525.3 V515.3 L1617.88,511.29999999999995" stroke="#7b8de3" stroke-width="1.2" fill="none"/></svg>
<div class="t" style="left:1622.88px;top:501.29999999999995px;font-size:15px;color:#7b8de3">闲置资产数量 4</div>
<svg style="position:absolute;left:0;top:0;overflow:visible" width="1" height="1"><path d="M1848.035,525.3 V515.3 L1859.035,511.29999999999995" stroke="#9dcdfb" stroke-width="1.2" fill="none"/></svg>
<div class="t" style="left:1864.035px;top:501.29999999999995px;font-size:15px;color:#9dcdfb">在用资产数量 5</div>
<svg style="position:absolute;left:0;top:0;overflow:visible" width="1" height="1"><path d="M1499.7,637.7 V627.7 L1510.7,623.7" stroke="#7b8de3" stroke-width="1.2" fill="none"/></svg>
<div class="t" style="left:1515.7px;top:613.7px;font-size:15px;color:#7b8de3">闲置资产数量 0</div>
<svg style="position:absolute;left:0;top:0;overflow:visible" width="1" height="1"><path d="M1526.4950000000001,647.7 V680 L1538.4950000000001,684.5" stroke="#9dcdfb" stroke-width="1.2" fill="none"/></svg>
<div class="t" style="left:1543.4950000000001px;top:674.5px;font-size:15px;color:#9dcdfb">在用资产数量 1</div>
<svg style="position:absolute;left:0;top:0;overflow:visible" width="1" height="1"><path d="M1633.6750000000002,750 V740 L1644.6750000000002,736" stroke="#7b8de3" stroke-width="1.2" fill="none"/></svg>
<div class="t" style="left:1649.6750000000002px;top:726px;font-size:15px;color:#7b8de3">闲置资产数量 5</div>
<svg style="position:absolute;left:0;top:0;overflow:visible" width="1" height="1"><path d="M1821.24,750 V740 L1832.24,736" stroke="#9dcdfb" stroke-width="1.2" fill="none"/></svg>
<div class="t" style="left:1837.24px;top:726px;font-size:15px;color:#9dcdfb">在用资产数量 2</div>
<!-- cardG -->
<div class="t ttl" style="left:1369px;top:864.0px">使用状态分布</div>
<div class="t" style="left:2068px;top:865.4px;font-size:16px;color:#555">更多</div>
<svg style="position:absolute;left:0;top:0;overflow:visible" width="1" height="1"><path d="M1632.00,988.20 A95.5,95.5 0 0 1 1726.05,1100.30 L1678.78,1091.95 A47.5,47.5 0 0 0 1632.00,1036.20 Z" fill="#b8ebf8" stroke="#fff" stroke-width="1.6" stroke-linejoin="round"/><path d="M1726.05,1100.30 A95.5,95.5 0 0 1 1693.38,1156.86 L1662.53,1120.09 A47.5,47.5 0 0 0 1678.78,1091.95 Z" fill="#b5dcf5" stroke="#fff" stroke-width="1.6" stroke-linejoin="round"/><path d="M1693.38,1156.86 A95.5,95.5 0 0 1 1664.63,1173.45 L1648.23,1128.34 A47.5,47.5 0 0 0 1662.53,1120.09 Z" fill="#a5c8f2" stroke="#fff" stroke-width="1.6" stroke-linejoin="round"/><path d="M1664.63,1173.45 A95.5,95.5 0 0 1 1570.62,1010.54 L1601.47,1047.31 A47.5,47.5 0 0 0 1648.23,1128.34 Z" fill="#92b3eb" stroke="#fff" stroke-width="1.6" stroke-linejoin="round"/><path d="M1570.62,1010.54 A95.5,95.5 0 0 1 1599.37,993.95 L1615.77,1039.06 A47.5,47.5 0 0 0 1601.47,1047.31 Z" fill="#7f9de6" stroke="#fff" stroke-width="1.6" stroke-linejoin="round"/><path d="M1599.37,993.95 A95.5,95.5 0 0 1 1632.00,988.20 L1632.00,1036.20 A47.5,47.5 0 0 0 1615.77,1039.06 Z" fill="#6f88e0" stroke="#fff" stroke-width="1.6" stroke-linejoin="round"/><path d="M1705,1021.5 L1712.5,1014.5 L1726,1014.5" stroke="#b8ebf8" stroke-width="1.3" fill="none"/><path d="M1715.5,1131 L1723.5,1137 L1735.5,1137" stroke="#b5dcf5" stroke-width="1.3" fill="none"/><path d="M1680,1166 L1691.7,1177.7 L1704.6,1177.7" stroke="#a5c8f2" stroke-width="1.3" fill="none"/><path d="M1550,1131 L1546,1146 L1534,1146" stroke="#92b3eb" stroke-width="1.3" fill="none"/><path d="M1585,1000.5 L1555,1007.4 L1543,1007.4" stroke="#7f9de6" stroke-width="1.3" fill="none"/><path d="M1614.5,988.6 L1591.7,976.7 L1579.8,976.7" stroke="#6f88e0" stroke-width="1.3" fill="none"/></svg>
<div class="t" style="left:1730px;top:998.0px;font-size:15px;color:#555">生产用</div>
<div class="t" style="left:1730px;top:1013.0px;font-size:15px;color:#555">27.78%</div>
<div class="t" style="left:1739.7px;top:1120.1px;font-size:15px;color:#555">非生产用</div>
<div class="t" style="left:1739.7px;top:1135.1px;font-size:15px;color:#555">11.11%</div>
<div class="t" style="left:1708px;top:1160.3px;font-size:15px;color:#555">租出</div>
<div class="t" style="left:1708px;top:1175.3px;font-size:15px;color:#555">5.56%</div>
<div class="t r" style="left:1529px;top:1128.5px;font-size:15px;color:#555">未使用</div>
<div class="t r" style="left:1529px;top:1143.5px;font-size:15px;color:#555">44.44%</div>
<div class="t r" style="left:1539px;top:991.5px;font-size:15px;color:#555">封存</div>
<div class="t r" style="left:1539px;top:1006.5px;font-size:15px;color:#555">5.56%</div>
<div class="t r" style="left:1575.8px;top:960.5px;font-size:15px;color:#555">处置</div>
<div class="t r" style="left:1575.8px;top:975.5px;font-size:15px;color:#555">5.55%</div>
<div class="t c" style="left:1632px;top:1061px;font-size:15px;color:#333">资产数量</div>
<div class="t c" style="left:1632px;top:1080px;font-size:28px;font-weight:bold;color:#333">17</div>
<div class="t" style="left:1936px;top:960.4px;font-size:20px;font-weight:bold;color:#333">资产数量 <span style="color:#2e9e44;margin-left:3px;font-size:21px">18</span></div>
<div style="position:absolute;left:1936px;top:996.3px;width:20px;height:14.4px;background:#b8ebf8"></div>
<div class="t" style="left:1961px;top:994.5px;font-size:18px;color:#555">生产用</div>
<div style="position:absolute;left:1936px;top:1033.8px;width:20px;height:14.4px;background:#b5dcf5"></div>
<div class="t" style="left:1961px;top:1032.0px;font-size:18px;color:#555">非生产用</div>
<div style="position:absolute;left:1936px;top:1071.3px;width:20px;height:14.4px;background:#a5c8f2"></div>
<div class="t" style="left:1961px;top:1069.5px;font-size:18px;color:#555">租出</div>
<div style="position:absolute;left:1936px;top:1108.8px;width:20px;height:14.4px;background:#92b3eb"></div>
<div class="t" style="left:1961px;top:1107.0px;font-size:18px;color:#555">未使用</div>
<div style="position:absolute;left:1936px;top:1146.3px;width:20px;height:14.4px;background:#7f9de6"></div>
<div class="t" style="left:1961px;top:1144.5px;font-size:18px;color:#555">封存</div>
<div style="position:absolute;left:1936px;top:1183.8px;width:20px;height:14.4px;background:#6f88e0"></div>
<div class="t" style="left:1961px;top:1182.0px;font-size:18px;color:#555">处置</div>
</body></html>
